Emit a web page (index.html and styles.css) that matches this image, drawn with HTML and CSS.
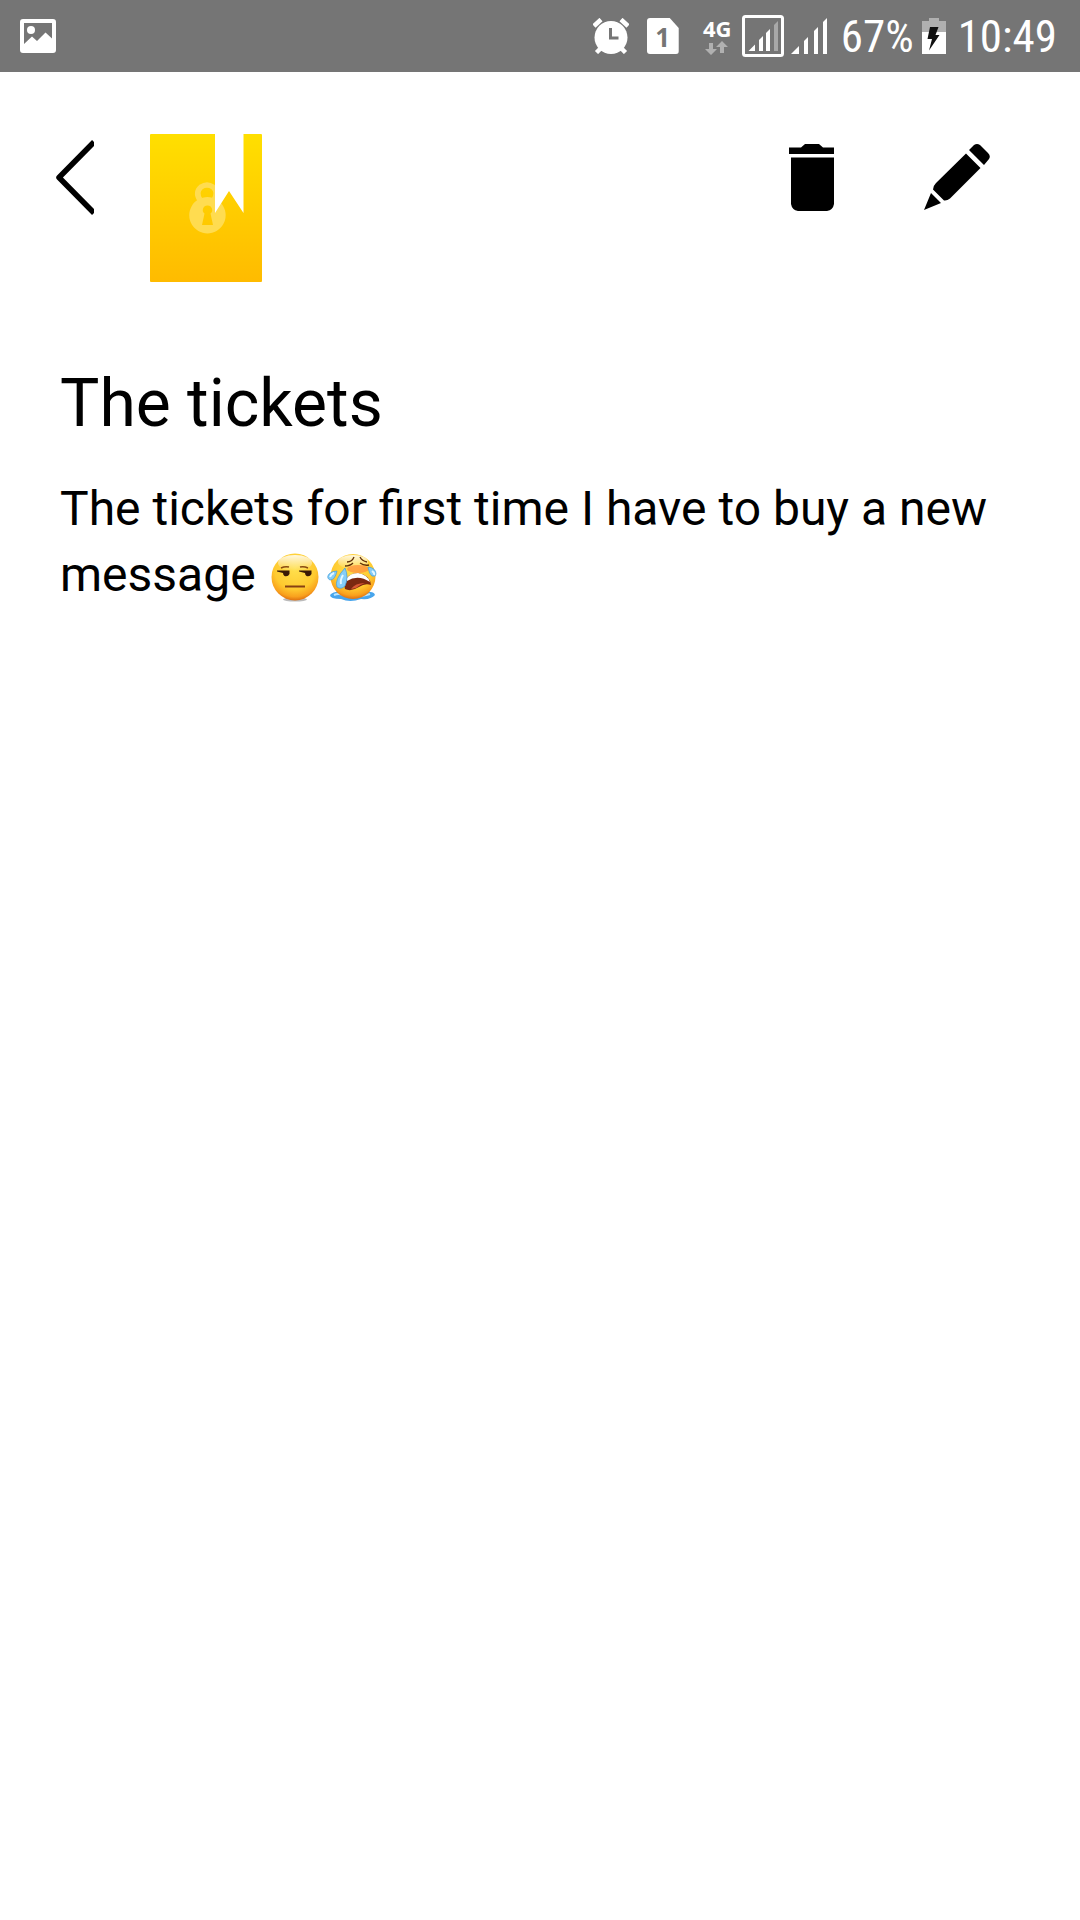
FILE: index.html
```html
<!DOCTYPE html>
<html lang="en">
<head>
<meta charset="utf-8">
<meta name="viewport" content="width=device-width, initial-scale=1">
<title>The tickets</title>
<link rel="stylesheet" href="styles.css">
</head>
<body>
<div class="status-bar">
  <svg class="picture-icon" width="36" height="34" viewBox="0 0 36 34" aria-hidden="true">
    <path fill="#fff" fill-rule="evenodd" d="M3 0H33Q36 0 36 3V31Q36 34 33 34H3Q0 34 0 31V3Q0 0 3 0ZM4 4V25L12 17.500L17 22L25.500 13.500L32 19.500V4Z"/>
    <circle cx="11" cy="11" r="4" fill="#fff"/>
  </svg>
  <svg class="alarm-icon" width="36" height="36" viewBox="0 0 36 36" aria-hidden="true">
    <path d="M1 8L8 1.500M28 1.500L35 8M3.500 34.500L8 30M32.500 34.500L28 30" stroke="#fff" stroke-width="4.500"/>
    <circle cx="18" cy="19.500" r="16.500" fill="#fff"/>
    <path d="M17.500 10V20H25.500" fill="none" stroke="#757575" stroke-width="3"/>
  </svg>
  <span class="sim">1</span>
  <div class="network">
    <span>4G</span>
    <svg width="24" height="14" viewBox="0 0 24 14" aria-hidden="true">
      <path fill="#b0b0b0" d="M4 2H8V8H12L6 14L0 8H4ZM17 0L23 6H19V12H15V6H11Z"/>
    </svg>
  </div>
  <svg class="signal-boxed" width="42" height="42" viewBox="0 0 42 42" aria-hidden="true">
    <rect x="1.500" y="1.500" width="39" height="39" rx="2" fill="none" stroke="#fff" stroke-width="3"/>
    <path fill="#fff" d="M6.500 36L13 29.500V36ZM17 36V25L21 21V36ZM24 36V18L28 14V36Z"/>
    <path fill="#a8a8a8" d="M32 36V10L36 6V36Z"/>
  </svg>
  <svg class="signal" width="36" height="36" viewBox="0 0 36 36" aria-hidden="true">
    <path fill="#fff" d="M0 36L8 28V36ZM13 36V23L17 19V36ZM23 36V13L27 9V36ZM32 36V4L36 0V36Z"/>
  </svg>
  <span class="reading percent">67%</span>
  <svg class="battery" width="24" height="36" viewBox="0 0 24 36" aria-hidden="true">
    <path fill="#b0b0b0" d="M7 0H17V3H24V14H0V3H7Z"/>
    <path fill="#fff" d="M0 14H24V36H0Z"/>
    <path fill="#111" d="M8 9H16.500L13.500 17H17.500L7 32.500L10 21H5.500Z"/>
  </svg>
  <time class="reading">10:49</time>
</div>

<header class="toolbar">
  <button class="icon-button" type="button" aria-label="Back">
    <svg width="38" height="76" viewBox="0 0 38 76">
      <path d="M38 2L3 37.500L38 73" fill="none" stroke="#000" stroke-width="5.500" stroke-linejoin="round"/>
    </svg>
  </button>
  <svg class="book" width="112" height="148" viewBox="0 0 112 148" role="img" aria-label="Locked notebook">
    <defs>
      <linearGradient id="cover" x1="0" y1="0" x2="0" y2="1">
        <stop offset="0" stop-color="#ffdf00"/>
        <stop offset="1" stop-color="#ffbb00"/>
      </linearGradient>
    </defs>
    <rect width="112" height="148" rx="1" fill="url(#cover)"/>
    <g fill="#ffdc50">
      <path fill-rule="evenodd" d="M57.500 63A18.200 18.200 0 1 1 57.400 63ZM57.500 71.500A4.500 4.500 0 0 0 54.500 79.500L52 91H63L60.500 79.500A4.500 4.500 0 0 0 57.500 71.500Z"/>
      <path d="M50 66Q45 58 51 53Q57 49 63 53Q69 58 64 66" fill="none" stroke="#ffdc50" stroke-width="5.500"/>
    </g>
    <path fill="#fff" d="M65 0H93.500V79L79 57L65 79Z"/>
  </svg>
  <div class="actions">
    <button class="icon-button" type="button" aria-label="Delete">
      <svg width="45" height="68" viewBox="0 1 45 68">
        <path d="M0 4.500H12L16 1H30L34 4.500H45V11H0ZM2 14.500H45V61Q44 67 38 68H9Q3 67 2 61Z"/>
      </svg>
    </button>
    <button class="icon-button" type="button" aria-label="Edit">
      <svg width="66" height="66" viewBox="0 0 66 66">
        <path d="M45 6L50 1Q53-1 56 1L64 9Q67 12 65 15L60 21ZM42 9.500L56.500 24L26 54.500Q23 57 20 56.500L9 45.500Q9 42 12 39ZM7 49L17 59L0 66Z"/>
      </svg>
    </button>
  </div>
</header>

<main class="note">
  <h1 class="note-title">The tickets</h1>
  <p class="note-body">The tickets for first time I have to buy a new message
    <span class="emojis"><svg width="48" height="50" viewBox="0 0 48 50" role="img" aria-label="Unamused face">
      <defs>
        <radialGradient id="skin" cx="0.500" cy="0.320" r="0.680">
          <stop offset="0" stop-color="#ffe04e"/>
          <stop offset="0.650" stop-color="#ffca2f"/>
          <stop offset="0.880" stop-color="#f9a11d"/>
          <stop offset="1" stop-color="#df7010"/>
        </radialGradient>
        <linearGradient id="shine" x1="0" y1="0" x2="0" y2="1">
          <stop offset="0" stop-color="#fff" stop-opacity="0.850"/>
          <stop offset="1" stop-color="#fff" stop-opacity="0"/>
        </linearGradient>
      </defs>
      <ellipse cx="24" cy="46.500" rx="12" ry="2" fill="#bbb"/>
      <circle cx="24" cy="24" r="23.500" fill="url(#skin)"/>
      <ellipse cx="24" cy="10" rx="17" ry="8" fill="url(#shine)"/>
      <path d="M10 15Q14 13 18 14M29 14Q33 13 37 15" fill="none" stroke="#8a4a10" stroke-width="1.500"/>
      <path d="M6 17.500H18.500V21Q17 24 13.500 23Q12 22 12 20L6 18.500ZM28 17.500H40.500V21Q39 24 35.500 23Q34 22 34 20L28 18.500Z" fill="#3a1905"/>
      <path d="M14 33.500H34" stroke="#874013" stroke-width="2"/>
    </svg><svg width="50" height="50" viewBox="0 0 50 50" role="img" aria-label="Loudly crying face">
      <path d="M3 42Q7 38 14 39H38Q47 38 48 42Q44 47 34 46Q23 50 14 46Q3 46 3 42Z" fill="#48a5ec"/>
      <path d="M7 42Q11 40 17 42M34 43Q40 42 43 41" fill="none" stroke="#b8e6ff" stroke-width="2"/>
      <circle cx="26" cy="23.500" r="22.500" fill="url(#skin)"/>
      <ellipse cx="26" cy="9" rx="15" ry="7" fill="url(#shine)"/>
      <ellipse cx="31" cy="16" rx="11" ry="4" fill="#ff8a3c" opacity="0.700"/>
      <path d="M20 9Q25 9 27 4M33 4Q35 8 40 9M18 13Q23 13 26 10M33 10Q37 13 42 12" fill="none" stroke="#623008" stroke-width="1.300"/>
      <path d="M17 31Q20 20 31 20Q43 22 44 32Q38 30 32 34Q24 39 18 36Z" fill="#7b2810"/>
      <path d="M19 26Q23 20 31 20Q41 22 43 29Q31 21 20 28Z" fill="#fff"/>
      <path d="M24 36Q28 30 38 30Q32 32 29 35Z" fill="#d85733"/>
      <path d="M18 15Q22 24 18 33Q14 37 10 34Q7 27 18 15ZM10 18Q8 27 3 27Q-1 25 2 21Q5 18 10 18ZM41 14Q49 15 49 21Q49 24 45 23Q42 21 41 14Z" fill="#85cdf8" stroke="#429edb" stroke-width="0.700"/>
      <path d="M16 22Q13 27 14 31M3 24Q4 21 7 20M45 18Q48 20 47 22" fill="none" stroke="#e4f7ff" stroke-width="2"/>
    </svg></span>
  </p>
</main>
</body>
</html>
```
FILE: styles.css
```css
* {
  box-sizing: border-box;
}

body {
  margin: 0;
  min-height: 100vh;
  background: #fff;
  color: #000;
  font-family: Roboto, sans-serif;
}

svg {
  display: block;
  flex: none;
}

.status-bar {
  display: flex;
  align-items: center;
  height: 72px;
  padding: 0 23px 0 20px;
  background: #757575;
  color: #fff;
}

.picture-icon {
  margin-right: auto;
}

.alarm-icon {
  margin-right: 18px;
}

.sim {
  width: 32px;
  height: 36px;
  margin-right: 24px;
  border-radius: 3px;
  background: #fff;
  clip-path: polygon(0 0, 72% 0, 100% 28%, 100% 100%, 0 100%);
  color: #757575;
  font: bold 26px/38px "Open Sans", sans-serif;
  text-align: center;
}

.network {
  display: flex;
  flex-direction: column;
  align-items: center;
  gap: 3px;
  width: 29px;
  margin-right: 10px;
  font: bold 22px/20px "Open Sans", sans-serif;
}

.signal-boxed {
  margin-right: 7px;
}

.signal {
  margin-right: 14px;
}

.reading {
  padding-top: 2px;
  font: 45px/70px "Roboto Condensed", "Liberation Sans Narrow", Roboto, sans-serif;
}

.percent {
  margin-right: 8px;
}

.battery {
  margin-right: 12px;
}

.toolbar {
  display: flex;
  align-items: flex-start;
  padding: 62px 90px 0 56px;
}

.icon-button {
  margin: 0;
  padding: 6px 0 0;
  border: 0;
  background: none;
  cursor: pointer;
}

.book {
  margin-left: 56px;
}

.actions {
  display: flex;
  align-items: flex-start;
  gap: 90px;
  margin-left: auto;
  padding-top: 4px;
}

.note {
  padding: 82px 60px;
}

.note-title {
  margin: 0 0 32px;
  font-size: 66px;
  line-height: 80px;
  font-weight: 400;
}

.note-body {
  margin: 0;
  font-size: 48px;
  line-height: 66px;
}

.emojis {
  display: inline-flex;
  gap: 8px;
  margin-left: 3px;
  vertical-align: middle;
}
```
